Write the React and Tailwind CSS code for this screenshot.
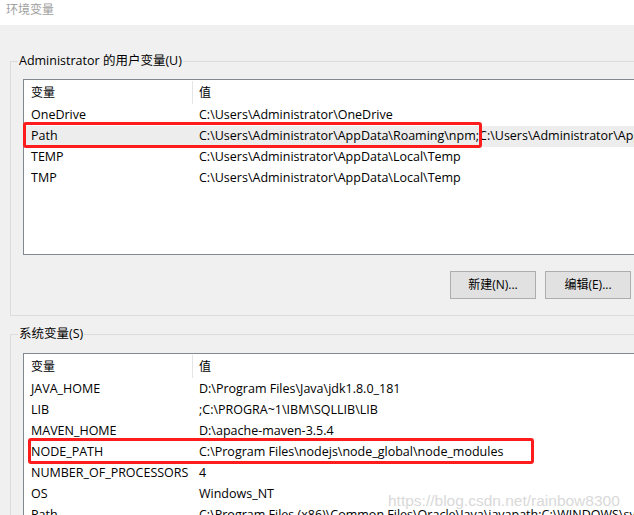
const userVars = [
  { name: 'OneDrive', value: 'C:\\Users\\Administrator\\OneDrive' },
  { name: 'Path', value: 'C:\\Users\\Administrator\\AppData\\Roaming\\npm;C:\\Users\\Administrator\\AppData\\Local\\Microsoft\\WindowsApps;', selected: true },
  { name: 'TEMP', value: 'C:\\Users\\Administrator\\AppData\\Local\\Temp' },
  { name: 'TMP', value: 'C:\\Users\\Administrator\\AppData\\Local\\Temp' },
];

const systemVars = [
  { name: 'JAVA_HOME', value: 'D:\\Program Files\\Java\\jdk1.8.0_181' },
  { name: 'LIB', value: ';C:\\PROGRA~1\\IBM\\SQLLIB\\LIB' },
  { name: 'MAVEN_HOME', value: 'D:\\apache-maven-3.5.4' },
  { name: 'NODE_PATH', value: 'C:\\Program Files\\nodejs\\node_global\\node_modules' },
  { name: 'NUMBER_OF_PROCESSORS', value: '4' },
  { name: 'OS', value: 'Windows_NT' },
  { name: 'Path', value: 'C:\\Program Files (x86)\\Common Files\\Oracle\\Java\\javapath;C:\\WINDOWS\\system32;C:\\WINDOWS' },
];

const VarList = ({ rows, height }) => (
  <div className={`ml-[12px] w-[700px] border border-[#828790] bg-white text-[12.5px] ${height}`}>
    <div className="flex h-[25px] items-center text-[12px]">
      <div className="w-[168px] shrink-0 pl-[7px]">变量</div>
      <div className="h-[23px] w-px bg-[#e5e5e5]" />
      <div className="pl-[6px]">值</div>
    </div>
    {rows.map(row => (
      <div key={row.name} className={`flex h-[21px] items-center whitespace-nowrap ${row.selected ? 'bg-[#ededed]' : ''}`}>
        <div className="w-[169px] shrink-0 pl-[7px]">{row.name}</div>
        <div className="pl-[6px]">{row.value}</div>
      </div>
    ))}
  </div>
);

const GroupBox = ({ title, children, className = '' }) => (
  <div className={`ml-[10px] w-[720px] border border-[#dcdcdc] ${className}`}>
    <div className="-mt-[9px] ml-[7px] w-fit bg-[#f0f0f0] px-[1px] text-[12.5px] leading-[16px]">{title}</div>
    {children}
  </div>
);

export default function App() {
  return (
    <div
      className="relative h-[515px] w-[634px] overflow-hidden bg-[#f0f0f0] text-[12px] text-black"
      style={{ fontFamily: '"Segoe UI", "Open Sans", "Noto Sans CJK SC", sans-serif' }}
    >
      <div className="flex h-[25px] items-start bg-white pl-[6px] pt-[1px] text-[12px] text-[#a0a0a0]">环境变量</div>

      <GroupBox title="Administrator 的用户变量(U)" className="mt-[36px] h-[255px]">
        <div className="mt-[10px]">
          <VarList rows={userVars} height="h-[176px]" />
        </div>
        <div className="ml-[439px] mt-[16px] flex gap-[9px]">
          <button className="h-[28px] w-[86px] border border-[#adadad] bg-[#e1e1e1]">新建(N)...</button>
          <button className="h-[28px] w-[86px] border border-[#adadad] bg-[#e1e1e1]">编辑(E)...</button>
        </div>
      </GroupBox>

      <GroupBox title="系统变量(S)" className="mt-[18px] h-[200px]">
        <div className="mt-[11px]">
          <VarList rows={systemVars} height="h-[200px]" />
        </div>
      </GroupBox>

      <div className="pointer-events-none absolute left-[23px] top-[122px] h-[26px] w-[459px] rounded-[3px] border-[3px] border-[#ff1c1c]" />
      <div className="pointer-events-none absolute left-[28px] top-[438px] h-[26px] w-[506px] rounded-[3px] border-[3px] border-[#ff1c1c]" />

      <div
        className="pointer-events-none absolute left-[388px] top-[489px] text-[15.5px] text-[#d9d9d9]"
        style={{ fontFamily: '"Liberation Sans", Arial, sans-serif' }}
      >
        https://blog.csdn.net/rainbow8300
      </div>
    </div>
  );
}
